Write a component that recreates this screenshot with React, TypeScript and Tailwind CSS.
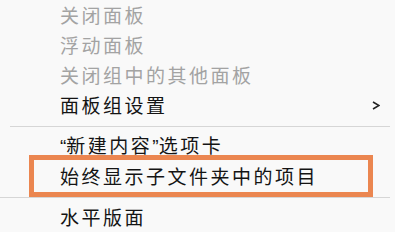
import React from 'react'

const font = { fontFamily: '"Noto Sans CJK SC", "Noto Sans", sans-serif' }
const quote = { fontFamily: '"Liberation Sans", sans-serif' }

function Item({ label, disabled, sub }: { label: React.ReactNode; disabled?: boolean; sub?: boolean }) {
  return (
    <div className="flex h-[30px] shrink-0 items-center justify-between pl-[60px] pr-[15px]">
      <span className={`text-[19px] tracking-[2.5px] ${disabled ? 'text-[#a3a3a3]' : 'text-[#141414]'}`}>{label}</span>
      {sub && (
        <svg width="8" height="9" viewBox="0 0 8 9">
          <path d="M1 1 L7 4.5 L1 8" fill="none" stroke="#222" strokeWidth="1.6" />
        </svg>
      )}
    </div>
  )
}

export default function App() {
  return (
    <div className="h-[232px] w-[395px] overflow-hidden bg-[#f9f9f9]" style={font}>
      <div className="flex flex-col">
        <Item label="关闭面板" disabled />
        <Item label="浮动面板" disabled />
        <Item label="关闭组中的其他面板" disabled />
        <Item label="面板组设置" sub />
        <div className="ml-[10px] mr-[5px] mt-[6px] mb-[4px] h-px shrink-0 bg-[#d6d6d6]" />
        <Item
          label={
            <>
              <span style={quote} className="tracking-normal">“</span>新建内容<span style={quote} className="tracking-normal">”</span>选项卡
            </>
          }
        />
        <div className="ml-[29px] mr-[22px] -mt-[6px] flex h-[42px] shrink-0 items-center border-[5px] border-[#eb8650] pl-[26px]">
          <span className="text-[19px] tracking-[2.5px] text-[#141414]">始终显示子文件夹中的项目</span>
        </div>
        <div className="mr-[5px] h-px shrink-0 bg-[#d6d6d6]" />
        <div className="h-[4px] shrink-0" />
        <Item label="水平版面" />
      </div>
    </div>
  )
}
